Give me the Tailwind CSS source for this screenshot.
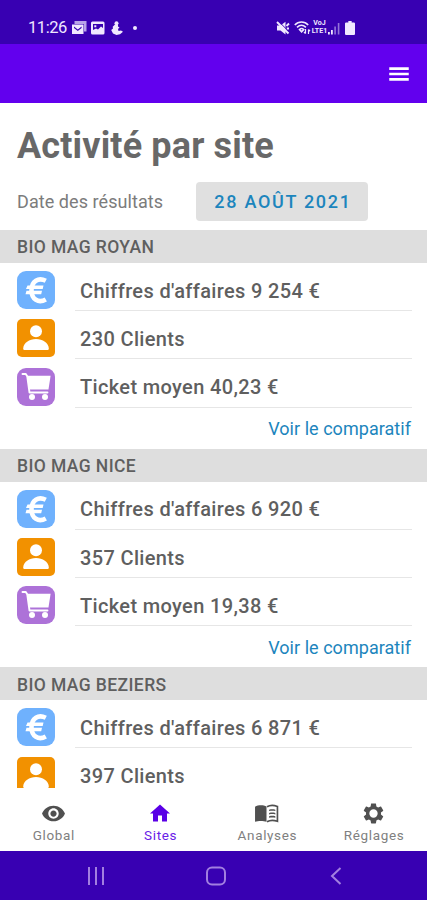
<!DOCTYPE html>
<html lang="fr">
<head>
  <meta charset="UTF-8" />
  <meta name="viewport" content="width=device-width, initial-scale=1.0" />
  <title>Activité par site</title>
  <script src="https://cdn.jsdelivr.net/npm/@tailwindcss/browser@4"></script>
</head>
<body class="bg-white font-['Roboto',sans-serif] text-[#5f5f5f] overflow-hidden">

  <!-- Shared icons -->
  <svg class="hidden">
    <symbol id="euro" viewBox="0 0 38 38">
      <rect width="38" height="38" rx="9" fill="#6fb1fd" />
      <path d="M28.800 9.800C21.500 6.200 14.500 10 14.500 19.200s7 13.300 14.300 9.300" fill="none" stroke="#fff" stroke-width="4.600" />
      <path d="M10.500 14.500h16l-.8 3.400H9zM9.500 19.800h15.500l-.8 3.400H8.500z" fill="#fff" />
    </symbol>
    <symbol id="person" viewBox="0 0 38 38">
      <rect width="38" height="38" rx="5" fill="#f29100" />
      <circle cx="19" cy="12.200" r="6" fill="#fff" />
      <path d="M6.200 29.500C6.200 24 12.500 20 19 20s12.800 4 12.800 9.500c0 1-.6 1.500-1.500 1.500H7.700c-.9 0-1.500-.5-1.500-1.500z" fill="#fff" />
    </symbol>
    <symbol id="cart" viewBox="0 0 38 38">
      <rect width="38" height="38" rx="9" fill="#ad72d8" />
      <path d="M5.500 6h3.300l1.500 2.500L12.500 24.500H30.500" fill="none" stroke="#fff" stroke-width="1.900" stroke-linejoin="round" stroke-linecap="round" />
      <path d="M9.800 7.800h23.800L31.500 21.500H12z" fill="#fff" />
      <circle cx="15" cy="29" r="3" fill="#fff" />
      <circle cx="28" cy="29" r="3" fill="#fff" />
    </symbol>
  </svg>

  <div class="w-[427px] h-[900px] flex flex-col">

    <!-- Status bar -->
    <div class="h-11 shrink-0 bg-[#3800b2] text-[#f0e8ff] flex items-center pt-[11px] pl-7">
      <span class="text-[16.5px] leading-none w-[43px] pt-px tracking-[-0.45px]">11:26</span>
      <svg class="w-4 h-4" viewBox="0 0 16 16" fill="currentColor">
        <path d="M3.500 1H15.500v10.500H13V4H3.500z" opacity=".7" />
        <path fill-rule="evenodd" d="M1 4.500h11.500V14H1zM3 6.500l3.800 3 3.800-3v1.600l-3.800 3-3.800-3z" />
      </svg>
      <svg class="ml-[3px] w-4 h-4" viewBox="0 0 16 16" fill="currentColor">
        <path fill-rule="evenodd" d="M2.500 1.500h10.500a1.500 1.500 0 0 1 1.500 1.500v10a1.500 1.500 0 0 1-1.500 1.500H2.500A1.500 1.500 0 0 1 1 13V3a1.500 1.500 0 0 1 1.500-1.500zM3 4v6l3-1.500 2 1 3-3 2 1.500V4zM4.300 5.200h2v2h-2z" />
      </svg>
      <svg class="ml-1 w-[14px] h-4" viewBox="0 0 14 16" fill="currentColor">
        <circle cx="6.500" cy="3.200" r="2" />
        <path d="M5 4.500h3v2l1.500 1-1.500 1.500.5 2L11 10.500l2 1.200-3 2.500-3.500.8L3 13.500 1.200 10 3 8.500l-.3-1.700z" />
      </svg>
      <span class="ml-[9px] w-1 h-1 rounded-full bg-current"></span>

      <svg class="ml-[139px] w-[14px] h-[14px]" viewBox="0 0 14 14" fill="currentColor">
        <path d="M1 4.500h3.500L9.500.8v12.700L4.500 9.500H1z" />
        <path d="M2.300 0l12 12" stroke="#3800b2" stroke-width="1" />
        <path d="M1 1l11.500 11.500M10.500 5l2.500-2.500M10.800 7.500h2.200" stroke="currentColor" stroke-width="1.900" />
      </svg>
      <svg class="ml-[4px] w-[17px] h-[14px]" viewBox="0 0 17 14" fill="none" stroke="currentColor" stroke-width="1.600">
        <path d="M.8 4C4.500 0 10.500 0 14.200 4M3 6.300c2.700-2.500 6.200-2.500 8.900 0M5.500 8.500c1.300-1.200 2.900-1.200 4.200 0L7.600 10.800z" />
        <path d="M11.500 8v4.500M10 11l1.500 1.700M14.500 13V8.500M16 10.200l-1.500-1.700" stroke-width="1.200" />
      </svg>
      <span class="w-[17px] flex flex-col items-center text-[7px] font-bold">
        <span class="h-[7px] leading-[7px]">VoJ</span>
        <span class="h-[8px] leading-[9px]">LTE1</span>
      </span>
      <svg class="w-[12px] h-[14px]" viewBox="0 0 12 14" fill="currentColor">
        <path d="M0 11h1.800v2.500H0zM3 9h1.800v4.500H3z" />
        <path d="M6.300 5.500h1.600v8H6.300zM9.800 2h1.600v11.500H9.800z" opacity=".5" />
      </svg>
      <svg class="ml-[5px] w-[10px] h-[14px]" viewBox="0 0 9 14" preserveAspectRatio="none" fill="currentColor">
        <path d="M3 0h3v1.500h2a1 1 0 0 1 1 1V13a1 1 0 0 1-1 1H1a1 1 0 0 1-1-1V2.500a1 1 0 0 1 1-1h2z" />
      </svg>
    </div>

    <!-- App bar -->
    <div class="h-[58.500px] shrink-0 bg-[#6200ee] flex items-center justify-end pr-[15.500px] pt-px">
      <svg class="w-[26px] h-[26px]" viewBox="0 0 24 24" fill="#fff">
        <path d="M3 18.200h18v-2.400H3zm0-5h18v-2.400H3zm0-7.400v2.400h18V5.800z" />
      </svg>
    </div>

    <!-- Content -->
    <main class="h-[685.500px] shrink-0 overflow-hidden">
      <h1 class="pt-[23px] pl-[17px] text-[36px] leading-10 font-bold tracking-[0.15px] text-[#686868]">Activité par site</h1>
      <div class="mt-4 pl-[17px] h-[39px] flex items-center">
        <span class="w-[179px] text-[18px] tracking-[0.07px] text-[#7c7c7c]">Date des résultats</span>
        <button class="w-[172px] h-[39px] pl-[2px] rounded bg-[#e0e0e0] text-[18px] font-medium tracking-[1.700px] text-[#1c85bd] whitespace-nowrap">28 AOÛT 2021</button>
      </div>

      <section class="mt-[9.500px] h-[218.700px]">
        <h2 class="h-[33px] pl-[17px] pt-px bg-[#dedede] flex items-center text-[17.5px] tracking-[0.4px] font-medium">BIO MAG ROYAN</h2>
        <div class="h-[48.300px] pl-[17px] pt-2 flex">
          <svg class="w-[38px] h-[38px] shrink-0"><use href="#euro" /></svg>
          <p class="ml-5 mr-[15px] grow pl-[5px] h-10 leading-[40px] text-[20px] tracking-[0.35px] font-medium border-b border-[#e6e6e6]">Chiffres d'affaires 9 254 €</p>
        </div>
        <div class="h-[48.300px] pl-[17px] pt-2 flex">
          <svg class="w-[38px] h-[38px] shrink-0"><use href="#person" /></svg>
          <p class="ml-5 mr-[15px] grow pl-[5px] h-10 leading-[40px] text-[20px] tracking-[0.35px] font-medium border-b border-[#e6e6e6]">230 Clients</p>
        </div>
        <div class="h-[48.300px] pl-[17px] pt-2 flex">
          <svg class="w-[38px] h-[38px] shrink-0"><use href="#cart" /></svg>
          <p class="ml-5 mr-[15px] grow pl-[5px] h-10 leading-[39px] text-[20px] tracking-[0.35px] font-medium border-b border-[#e6e6e6]">Ticket moyen 40,23 €</p>
        </div>
        <a class="block h-10 pr-4 text-right text-[18px] leading-[42px] tracking-[0.04px] text-[#1c85bd]">Voir le comparatif</a>
      </section>

      <section class="h-[218.700px]">
        <h2 class="h-[33px] pl-[17px] pt-px bg-[#dedede] flex items-center text-[17.5px] tracking-[0.4px] font-medium">BIO MAG NICE</h2>
        <div class="h-[48.300px] pl-[17px] pt-2 flex">
          <svg class="w-[38px] h-[38px] shrink-0"><use href="#euro" /></svg>
          <p class="ml-5 mr-[15px] grow pl-[5px] h-10 leading-[39px] text-[20px] tracking-[0.35px] font-medium border-b border-[#e6e6e6]">Chiffres d'affaires 6 920 €</p>
        </div>
        <div class="h-[48.300px] pl-[17px] pt-2 flex">
          <svg class="w-[38px] h-[38px] shrink-0"><use href="#person" /></svg>
          <p class="ml-5 mr-[15px] grow pl-[5px] h-10 leading-[40px] text-[20px] tracking-[0.35px] font-medium border-b border-[#e6e6e6]">357 Clients</p>
        </div>
        <div class="h-[48.300px] pl-[17px] pt-2 flex">
          <svg class="w-[38px] h-[38px] shrink-0"><use href="#cart" /></svg>
          <p class="ml-5 mr-[15px] grow pl-[5px] h-10 leading-[40px] text-[20px] tracking-[0.35px] font-medium border-b border-[#e6e6e6]">Ticket moyen 19,38 €</p>
        </div>
        <a class="block h-10 pr-4 text-right text-[18px] leading-[42px] tracking-[0.04px] text-[#1c85bd]">Voir le comparatif</a>
      </section>

      <section>
        <h2 class="h-[33px] pl-[17px] pt-[2px] bg-[#dedede] flex items-center text-[17.5px] tracking-[0.4px] font-medium">BIO MAG BEZIERS</h2>
        <div class="h-[48.300px] pl-[17px] pt-2 flex">
          <svg class="w-[38px] h-[38px] shrink-0"><use href="#euro" /></svg>
          <p class="ml-5 mr-[15px] grow pl-[5px] h-10 leading-[40px] text-[20px] tracking-[0.35px] font-medium border-b border-[#e6e6e6]">Chiffres d'affaires 6 871 €</p>
        </div>
        <div class="h-[48.300px] pl-[17px] pt-2 flex">
          <svg class="w-[38px] h-[38px] shrink-0"><use href="#person" /></svg>
          <p class="ml-5 mr-[15px] grow pl-[5px] h-10 leading-[39px] text-[20px] tracking-[0.35px] font-medium">397 Clients</p>
        </div>
      </section>
    </main>

    <!-- Tabs -->
    <nav class="h-[63px] shrink-0 grid grid-cols-4 bg-white text-[#808080] text-[13.5px] leading-4 tracking-[0.65px]">
      <a class="flex flex-col items-center pt-[13px]">
        <svg class="w-[25px] h-[25px]" viewBox="0 0 24 24" fill="#505050">
          <path d="M12 4.500C7 4.500 2.730 7.610 1 12c1.730 4.390 6 7.500 11 7.500s9.270-3.110 11-7.500c-1.730-4.390-6-7.500-11-7.500zM12 17c-2.760 0-5-2.240-5-5s2.240-5 5-5 5 2.240 5 5-2.240 5-5 5zm0-8c-1.660 0-3 1.340-3 3s1.340 3 3 3 3-1.340 3-3-1.340-3-3-3z" />
        </svg>
        <span class="mt-px ml-px">Global</span>
      </a>
      <a class="flex flex-col items-center pt-[13px] text-[#6a20e8]">
        <svg class="w-[24px] h-[25px]" viewBox="0 0 24 24" fill="#5a00e6">
          <path d="M10 20v-6h4v6h5v-8h3L12 3 2 12h3v8z" />
        </svg>
        <span class="mt-px ml-px">Sites</span>
      </a>
      <a class="flex flex-col items-center pt-[13px]">
        <svg class="w-[25px] h-[25px]" viewBox="0 0 24 24" fill="#505050">
          <path d="M1 5.500C4 3.800 9 3.800 12 5.300V20C9 18.800 4 18.800 1 20z" />
          <path d="M12.500 5.500C15 4 19.500 4 22.500 5.200V19.500C19.500 18.500 15 18.500 12.500 20" fill="none" stroke="#505050" stroke-width="1.600" />
          <path d="M14.500 8.300c2-.6 4-.6 6 0v1.400c-2-.5-4-.5-6 0zm0 3.200c2-.6 4-.6 6 0v1.400c-2-.5-4-.5-6 0zm0 3.200c2-.6 4-.6 6 0v1.400c-2-.5-4-.5-6 0z" />
        </svg>
        <span class="mt-px ml-px">Analyses</span>
      </a>
      <a class="flex flex-col items-center pt-[13px]">
        <svg class="w-[25px] h-[25px]" viewBox="0 0 24 24" fill="#505050">
          <path fill-rule="evenodd" d="M19.140 12.940c.04-.3.060-.61.060-.94 0-.32-.02-.64-.07-.94l2.030-1.580c.18-.14.230-.41.120-.61l-1.920-3.320c-.12-.22-.37-.29-.59-.22l-2.390.960c-.5-.38-1.030-.7-1.620-.94l-.36-2.540c-.04-.24-.24-.41-.48-.41h-3.840c-.24 0-.43.17-.47.41l-.36 2.540c-.59.240-1.130.570-1.620.940l-2.390-.96c-.22-.08-.47 0-.59.220L2.740 8.870c-.12.210-.08.470.120.610l2.030 1.580c-.05.300-.09.630-.09.940s.02.640.070.940l-2.030 1.580c-.18.140-.23.410-.12.610l1.920 3.320c.12.220.37.290.59.220l2.390-.96c.5.380 1.030.7 1.620.940l.36 2.540c.05.240.24.410.48.410h3.840c.24 0 .44-.17.470-.41l.36-2.540c.59-.24 1.130-.56 1.620-.94l2.390.960c.22.080.47 0 .59-.22l1.920-3.320c.12-.22.070-.47-.12-.61l-2.010-1.580zM12 16a4 4 0 1 1 0-8 4 4 0 0 1 0 8z" />
        </svg>
        <span class="mt-px ml-px">Réglages</span>
      </a>
    </nav>

    <!-- System navigation -->
    <div class="h-[49px] shrink-0 bg-[#3800b2] flex items-center justify-between pl-[87px] pr-[85px]">
      <svg class="w-[19px] h-[18px]" viewBox="0 0 19 18" stroke="#a27fe0" stroke-width="2">
        <path d="M2 0v18M9 0v18M16 0v18" />
      </svg>
      <svg class="w-[20px] h-[20px] -ml-[4px]" viewBox="0 0 20 20" fill="none" stroke="#a27fe0" stroke-width="2">
        <rect x="1" y="1.500" width="18" height="17" rx="5" />
      </svg>
      <svg class="w-[12px] h-[18px]" viewBox="0 0 12 18" fill="none" stroke="#a27fe0" stroke-width="2">
        <path d="M10.500 1L2 9l8.500 8" />
      </svg>
    </div>
  </div>
</body>
</html>
